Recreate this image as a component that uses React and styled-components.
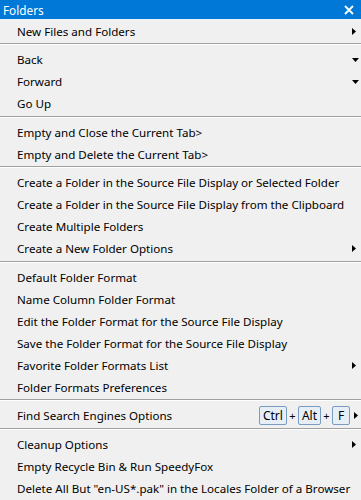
import styled, { createGlobalStyle } from "styled-components"

const GlobalStyle = createGlobalStyle`
  html, body {
    margin: 0;
    padding: 0;
    background: #f0f0f0;
  }
  body {
    font-family: "Segoe UI", "Noto Sans", "Open Sans", sans-serif;
  }
`

const sections = [
  [{ label: "New Files and Folders", arrow: "right" }],
  [
    { label: "Back", arrow: "down" },
    { label: "Forward", arrow: "down" },
    { label: "Go Up" },
  ],
  [
    { label: "Empty and Close the Current Tab>" },
    { label: "Empty and Delete the Current Tab>" },
  ],
  [
    { label: "Create a Folder in the Source File Display or Selected Folder" },
    { label: "Create a Folder in the Source File Display from the Clipboard" },
    { label: "Create Multiple Folders" },
    { label: "Create a New Folder Options", arrow: "right" },
  ],
  [
    { label: "Default Folder Format" },
    { label: "Name Column Folder Format" },
    { label: "Edit the Folder Format for the Source File Display" },
    { label: "Save the Folder Format for the Source File Display" },
    { label: "Favorite Folder Formats List", arrow: "right" },
    { label: "Folder Formats Preferences" },
  ],
  [{ label: "Find Search Engines Options", keys: ["Ctrl", "Alt", "F"], arrow: "right" }],
  [
    { label: "Cleanup Options", arrow: "right" },
    { label: "Empty Recycle Bin & Run SpeedyFox" },
    { label: "Delete All But \"en-US*.pak\" in the Locales Folder of a Browser" },
  ],
]

const App = () => {
  return (
    <Panel>
      <GlobalStyle />
      <TitleBar>
        <span>Folders</span>
        <svg width="10" height="10" viewBox="0 0 10 10">
          <path d="M1 1 L9 9 M9 1 L1 9" stroke="#fff" strokeWidth="1.8" />
        </svg>
      </TitleBar>
      <Menu>
        {sections.map((items, si) => (
          <Section key={si}>
            {si > 0 && <Separator />}
            {items.map((item) => (
              <Item key={item.label}>
                <Label>{item.label}</Label>
                {item.keys && (
                  <Keys>
                    {item.keys.map((k, ki) => (
                      <Combo key={k}>
                        {ki > 0 && <Plus>+</Plus>}
                        <Key>{k}</Key>
                      </Combo>
                    ))}
                  </Keys>
                )}
                <ArrowSlot $tight={!!item.keys}>
                  {item.arrow === "right" && (
                    <svg width="4" height="7" viewBox="0 0 4 7">
                      <path d="M0 0 L4 3.5 L0 7 Z" fill="#000" />
                    </svg>
                  )}
                  {item.arrow === "down" && (
                    <svg width="7" height="4" viewBox="0 0 7 4">
                      <path d="M0 0 L7 0 L3.5 4 Z" fill="#000" />
                    </svg>
                  )}
                </ArrowSlot>
              </Item>
            ))}
          </Section>
        ))}
      </Menu>
    </Panel>
  )
}

const Panel = styled.div`
  width: 361px;
  min-height: 500px;
  background: #f0f0f0;
  color: #000;
`

const TitleBar = styled.div`
  height: 19px;
  background: #0078d7;
  color: #fff;
  display: flex;
  align-items: center;
  justify-content: space-between;
  padding: 0 7px 0 3px;
  font-size: 11.8px;
  svg {
    display: block;
  }
`

const Menu = styled.div`
  padding-top: 1px;
`

const Section = styled.div`
  display: flex;
  flex-direction: column;
`

const Separator = styled.div`
  height: 1px;
  margin: 1px 0 3.5px;
  background: #a0a0a0;
  border-bottom: 1px solid #fff;
`

const Item = styled.div`
  height: 22px;
  display: flex;
  align-items: center;
  padding-left: 17px;
  font-size: 11.6px;
`

const Label = styled.span`
  flex: 1;
  white-space: nowrap;
`

const Keys = styled.div`
  display: flex;
  align-items: center;
`

const Combo = styled.div`
  display: flex;
  align-items: center;
`

const Plus = styled.span`
  width: 11px;
  text-align: center;
  font-size: 11px;
`

const Key = styled.span`
  height: 17px;
  min-width: 10px;
  padding: 0 3px;
  display: flex;
  align-items: center;
  justify-content: center;
  border: 1px solid #7a9cc0;
  border-radius: 2px;
  background: #e6eef7;
  font-size: 12px;
`

const ArrowSlot = styled.div`
  width: ${(p) => (p.$tight ? "11px" : "13px")};
  display: flex;
  justify-content: flex-start;
  padding-left: ${(p) => (p.$tight ? "4px" : "4px")};
  box-sizing: border-box;
  svg {
    display: block;
  }
`

export default App
